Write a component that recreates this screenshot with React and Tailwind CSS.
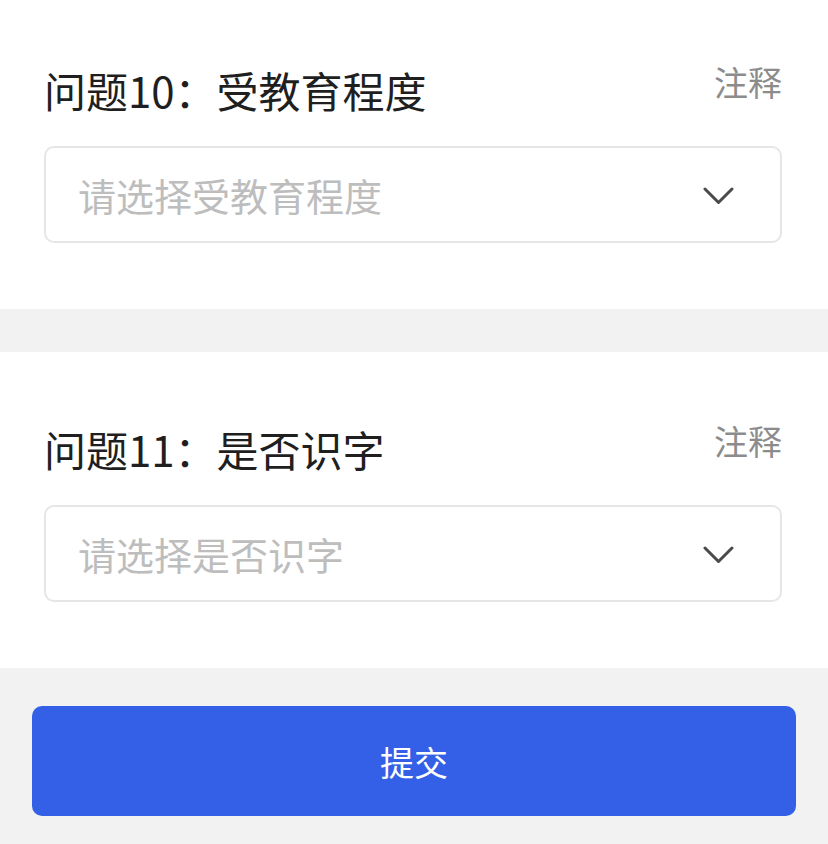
const QUESTIONS = [
  { id: 10, title: "问题10：受教育程度", placeholder: "请选择受教育程度" },
  { id: 11, title: "问题11：是否识字", placeholder: "请选择是否识字" },
];

const FONT = "font-['Noto_Sans_CJK_SC','Noto_Sans',sans-serif]";

function Chevron() {
  return (
    <svg width="31" height="18" viewBox="0 0 31 18" fill="none" className="mt-[2px]">
      <polyline
        points="2,2 15.5,15.5 29,2"
        stroke="#4a4a4a"
        strokeWidth="3"
        strokeLinecap="round"
        strokeLinejoin="round"
      />
    </svg>
  );
}

function QuestionBlock({ question, top }) {
  return (
    <section className={`bg-white pl-[44px] pr-[46px] pb-[66px] ${top}`}>
      <div className="flex items-start justify-between">
        <h2 className="mt-[4px] text-[42px] leading-none font-normal text-[#1f1f1f]">
          {question.title}
        </h2>
        <button type="button" className="text-[34px] leading-none text-[#8c8c8c]">
          注释
        </button>
      </div>
      <div className="mt-[35px] flex h-[97px] items-center justify-between rounded-[10px] border-2 border-[#e6e6e6] pl-[32px] pr-[46px]">
        <span className="text-[38px] leading-none text-[#bdbdbd]">{question.placeholder}</span>
        <Chevron />
      </div>
    </section>
  );
}

export default function App() {
  return (
    <div className={`min-h-[844px] w-[828px] bg-[#f2f2f2] ${FONT}`}>
      <QuestionBlock question={QUESTIONS[0]} top="pt-[65px]" />
      <div className="h-[43px]" />
      <QuestionBlock question={QUESTIONS[1]} top="pt-[72px]" />
      <div className="px-[32px] pt-[38px] pb-[28px]">
        <button
          type="button"
          className="flex h-[110px] w-full items-center justify-center rounded-[10px] bg-[#3360e6] text-[34px] text-white"
        >
          提交
        </button>
      </div>
    </div>
  );
}
